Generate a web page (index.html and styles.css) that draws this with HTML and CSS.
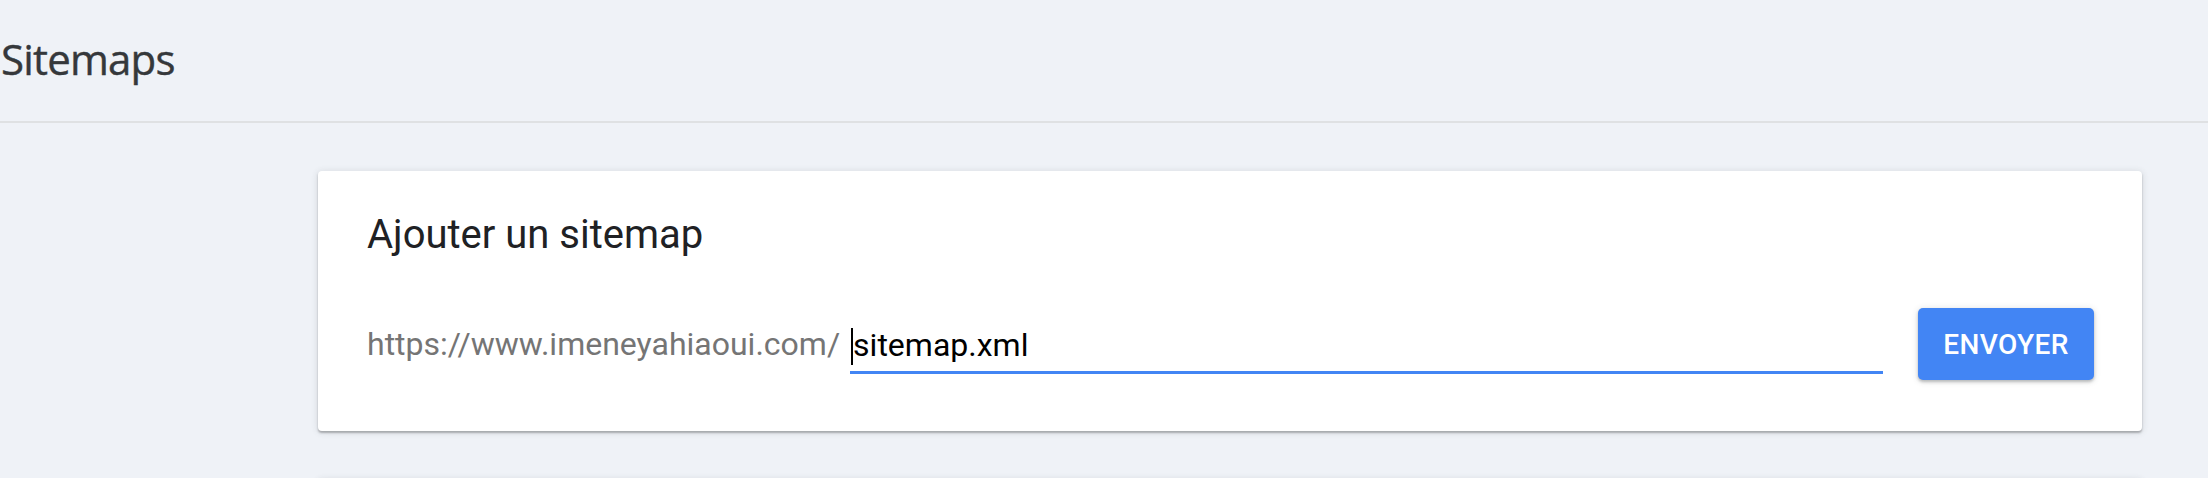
FILE: index.html
```html
<!DOCTYPE html>
<html lang="fr">
<head>
<meta charset="utf-8">
<title>Sitemaps</title>
<link rel="stylesheet" href="styles.css">
</head>
<body>
<header class="page-header">
  <h1 class="page-title">Sitemaps</h1>
</header>
<main class="content">
  <section class="card">
    <h2 class="card-title">Ajouter un sitemap</h2>
    <div class="add-row">
      <span class="url-prefix">https://www.imeneyahiaoui.com/</span>
      <div class="field"><span class="caret"></span>sitemap.xml</div>
      <button class="btn-submit" type="button">ENVOYER</button>
    </div>
  </section>
  <section class="card card-next"></section>
</main>
</body>
</html>
```

FILE: styles.css
```css
html, body {
  margin: 0;
  padding: 0;
}
body {
  background: #eff2f7;
  font-family: Roboto, "Liberation Sans", Arial, sans-serif;
  width: 2208px;
  height: 478px;
  overflow: hidden;
}
.page-header {
  height: 121px;
  border-bottom: 2px solid #dfe1e3;
  display: flex;
  align-items: flex-start;
  box-sizing: content-box;
}
.page-title {
  margin: 0;
  padding: 29px 0 0 1px;
  font-family: "Open Sans", Roboto, sans-serif;
  font-weight: 500;
  font-size: 42px;
  letter-spacing: -0.8px;
  line-height: 60px;
  color: #35383b;
  -webkit-text-stroke: 0.4px #35383b;
}
.content {
  padding: 48px 66px 0 318px;
}
.card {
  background: #fff;
  border-radius: 4px;
  box-shadow: 0 2px 2px 0 rgba(60, 64, 67, 0.35), 0 1px 6px 1px rgba(60, 64, 67, 0.12);
  padding: 40px 48px 51px 49px;
}
.card-title {
  margin: 0;
  font-weight: 400;
  font-size: 40px;
  line-height: 48px;
  color: #202124;
}
.add-row {
  margin-top: 49px;
  display: flex;
  align-items: center;
}
.url-prefix {
  font-size: 32px;
  line-height: 38px;
  color: #757575;
  white-space: nowrap;
}
.field {
  flex: 1;
  margin-left: 10px;
  padding: 11px 0 6px 0;
  font-size: 32px;
  line-height: 38px;
  color: #000;
  border-bottom: 3px solid #4285f4;
  white-space: nowrap;
}
.caret {
  display: inline-block;
  width: 2px;
  height: 37px;
  background: #000;
  margin-left: 1px;
  vertical-align: -9px;
}
.btn-submit {
  margin-left: 35px;
  width: 176px;
  height: 72px;
  border: none;
  border-radius: 5px;
  background: #4285f4;
  color: #fff;
  font-family: Roboto, "Liberation Sans", Arial, sans-serif;
  font-weight: 500;
  font-size: 28px;
  letter-spacing: 0.4px;
  padding: 0;
  box-shadow: 0 2px 3px 0 rgba(60, 64, 67, 0.3), 0 1px 6px 1px rgba(60, 64, 67, 0.12);
}
.card-next {
  margin-top: 48px;
  height: 200px;
  padding: 0;
}
```
